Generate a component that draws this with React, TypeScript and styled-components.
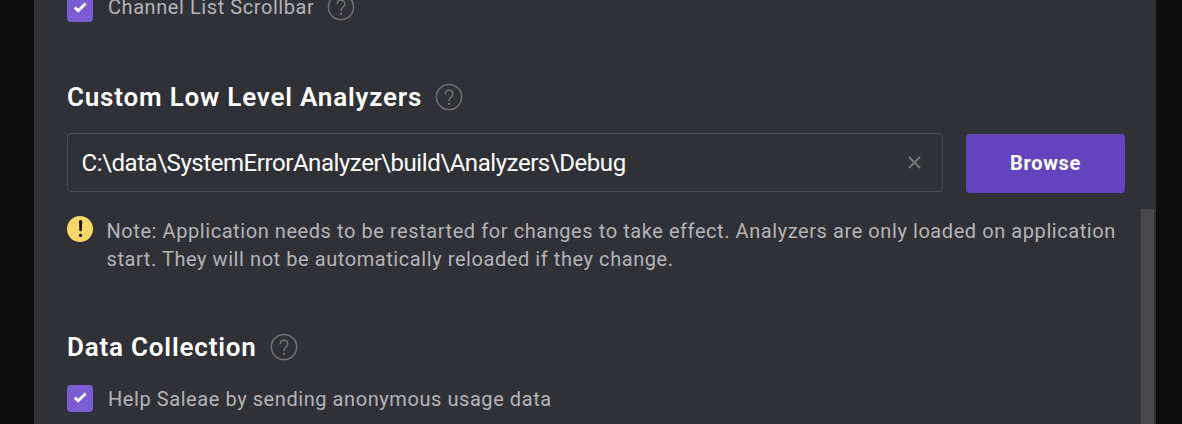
import React from "react";
import styled, { createGlobalStyle } from "styled-components";

const GlobalStyle = createGlobalStyle`
  * { box-sizing: border-box; }
  html, body { margin: 0; background: #0e0e0e; overflow: hidden; }
  body { font-family: Roboto, "Liberation Sans", sans-serif; }
`;

const Screen = styled.main`
  height: 424px;
  padding: 0 26px 0 34px;
  overflow: hidden;
`;

const Panel = styled.div`
  display: flex;
  height: 100%;
  background: #303136;
  overflow: hidden;
`;

const Content = styled.div`
  flex: 1;
  min-width: 0;
  padding: 0 16px 0 33px;
`;

const ScrollTrack = styled.div`
  width: 15px;
  padding: 209px 2px 0 0;
`;

const ScrollThumb = styled.div`
  height: 100%;
  background: #49484d;
`;

const OptionRow = styled.label<{ $top: number; $height: number }>`
  display: flex;
  align-items: center;
  height: ${(p) => p.$height}px;
  margin-top: ${(p) => p.$top}px;
`;

const Checkbox = styled.span`
  display: flex;
  align-self: flex-end;
  width: 26px;
  height: 27px;
  margin-right: 15px;
  border-radius: 4px;
  background: #7a5cd3;
`;

const OptionText = styled.span`
  color: #b4b4b7;
  font-size: 20px;
  line-height: 26px;
  letter-spacing: 0.57px;
  white-space: nowrap;
`;

const TitleRow = styled.div<{ $top: number }>`
  display: flex;
  align-items: center;
  height: 28px;
  margin-top: ${(p) => p.$top}px;
`;

const Title = styled.h2`
  margin: 0;
  color: #fff;
  font-size: 26px;
  font-weight: 600;
  line-height: 28px;
  letter-spacing: 0.8px;
  white-space: nowrap;
`;

const HelpSvg = styled.svg`
  flex: none;
  margin-left: 13px;
`;

const PathRow = styled.div`
  display: flex;
  align-items: flex-start;
  margin-top: 22px;
`;

const PathField = styled.div`
  display: flex;
  align-items: center;
  justify-content: space-between;
  width: 876px;
  height: 59px;
  padding: 0 21px 0 13.5px;
  border: 1px solid #4b4c50;
  border-radius: 4px;
`;

const PathText = styled.span`
  color: #fff;
  font-size: 24px;
  font-weight: 450;
  line-height: 30px;
  letter-spacing: -0.44px;
  white-space: nowrap;
`;

const BrowseButton = styled.button`
  width: 159px;
  height: 59px;
  margin: 1px 0 0 23px;
  padding: 0 0 1px;
  border: 0;
  border-radius: 4px;
  background: #6444be;
  color: #fff;
  font-family: inherit;
  font-size: 20px;
  font-weight: 700;
  letter-spacing: 0.7px;
`;

const Note = styled.div`
  display: flex;
  align-items: flex-start;
  margin-top: 23px;
`;

const NoteText = styled.p`
  margin: 1px 0 0 13.5px;
  color: #b4b4b7;
  font-size: 20px;
  line-height: 28px;
  letter-spacing: 0.57px;
  white-space: nowrap;
`;

const Check = () => (
  <svg width="26" height="27" viewBox="0 0 26 27" fill="none">
    <path d="M7.8 12.4l3.4 3.4 7.4-7.3" stroke="#fff" strokeWidth="2.8" />
  </svg>
);

const Help = () => (
  <HelpSvg width="28" height="28" viewBox="0 0 28 28" fill="none" stroke="#717276" strokeWidth="1.5">
    <circle cx="14" cy="14" r="12.6" />
    <path d="M10.2 11.2c0-2.4 1.5-4 3.8-4s3.8 1.5 3.8 3.7c0 1.6-.8 2.4-2 3.4-1.2 1.1-1.8 1.7-1.8 3.6" />
    <path d="M14 19.8v1.9" strokeWidth="2" />
  </HelpSvg>
);

const Clear = () => (
  <svg width="13" height="13" viewBox="0 0 13 13" stroke="#77787c" strokeWidth="1.9">
    <path d="M1 1l11 11M12 1L1 12" />
  </svg>
);

const Warning = () => (
  <svg width="26" height="26" viewBox="0 0 26 26">
    <circle cx="13" cy="13" r="13" fill="#fad867" />
    <path d="M12 4.7q1.6-1.6 3.2 0l-.4 10q-1.2 1.2-2.4 0z" fill="#111" />
    <circle cx="13.5" cy="19.4" r="1.6" fill="#111" />
  </svg>
);

export default function App() {
  return (
    <>
      <GlobalStyle />
      <Screen>
        <Panel>
          <Content>
            <OptionRow $top={-9} $height={31}>
              <Checkbox><Check /></Checkbox>
              <OptionText>Channel List Scrollbar</OptionText>
              <Help />
            </OptionRow>
            <TitleRow $top={61}>
              <Title>Custom Low Level Analyzers</Title>
              <Help />
            </TitleRow>
            <PathRow>
              <PathField>
                <PathText>C:\data\SystemErrorAnalyzer\build\Analyzers\Debug</PathText>
                <Clear />
              </PathField>
              <BrowseButton>Browse</BrowseButton>
            </PathRow>
            <Note>
              <Warning />
              <NoteText>
                Note: Application needs to be restarted for changes to take effect. Analyzers are only loaded on application
                <br />
                start. They will not be automatically reloaded if they change.
              </NoteText>
            </Note>
            <TitleRow $top={60}>
              <Title>Data Collection</Title>
              <Help />
            </TitleRow>
            <OptionRow $top={24} $height={27}>
              <Checkbox><Check /></Checkbox>
              <OptionText>Help Saleae by sending anonymous usage data</OptionText>
            </OptionRow>
          </Content>
          <ScrollTrack><ScrollThumb /></ScrollTrack>
        </Panel>
      </Screen>
    </>
  );
}
